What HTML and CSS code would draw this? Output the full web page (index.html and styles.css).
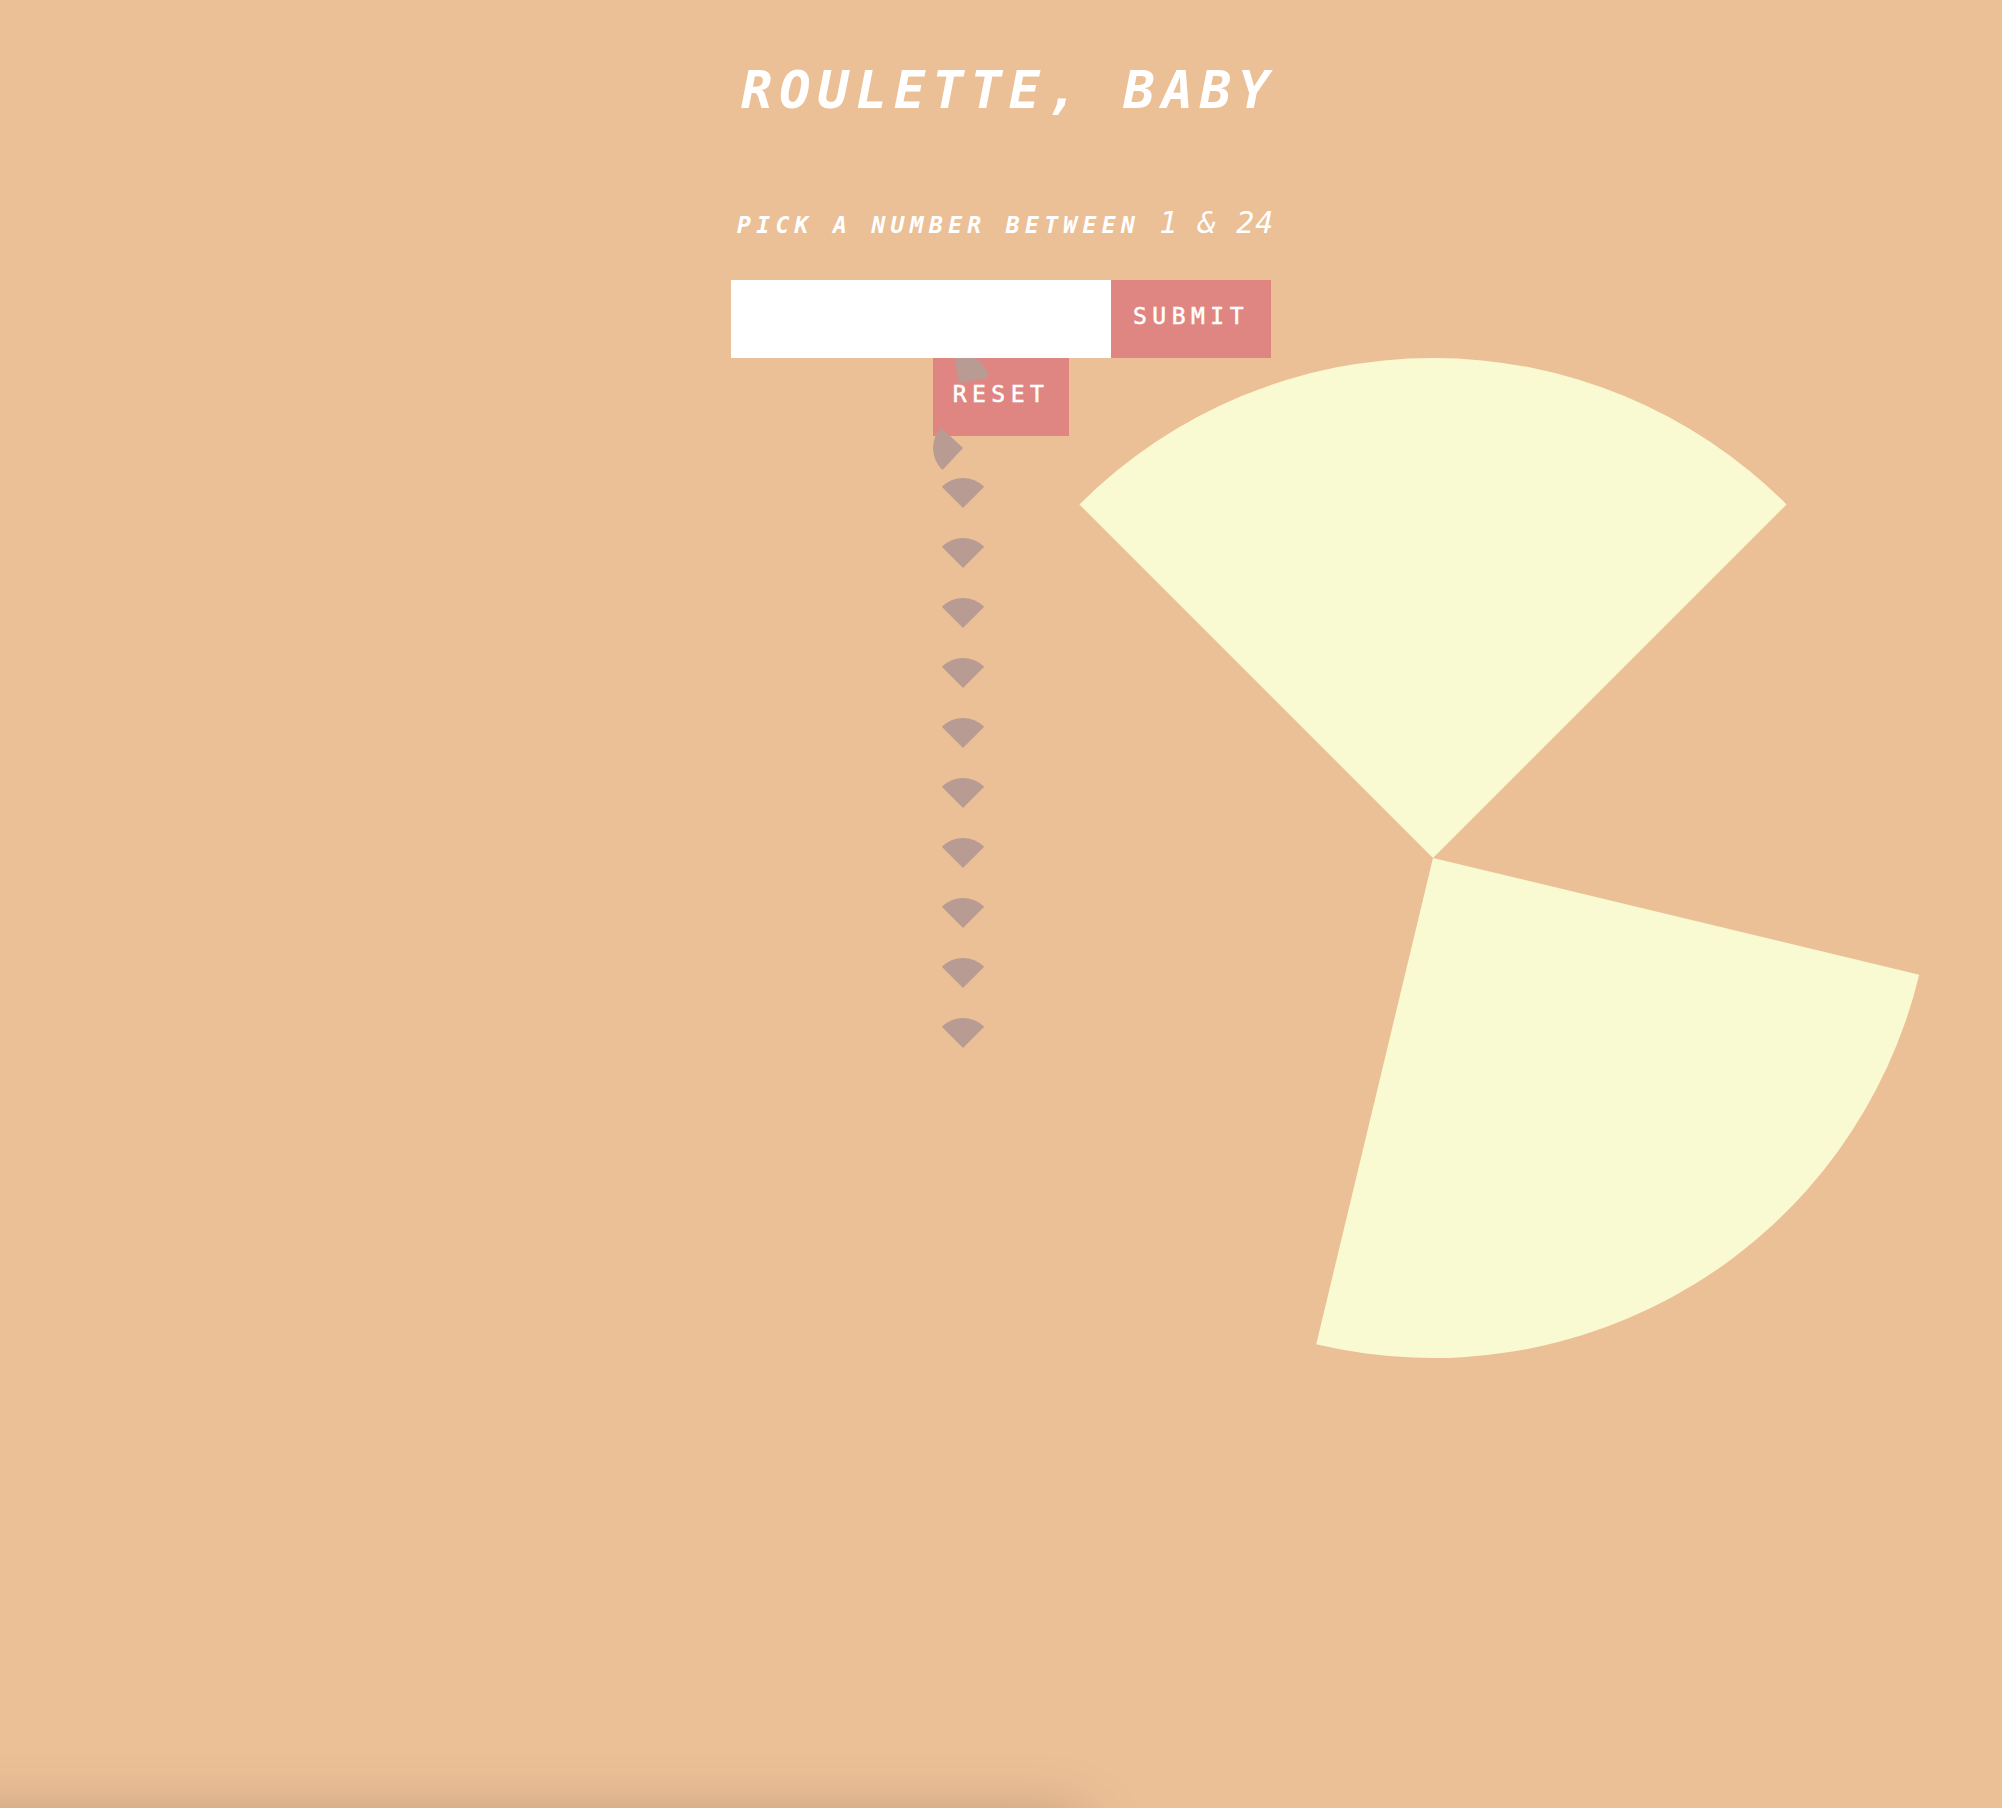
FILE: index.html
```html
<!DOCTYPE html>
<html lang="en">
<head>
<meta charset="utf-8">
<title>Roulette, Baby</title>
<link rel="stylesheet" href="styles.css">
</head>
<body>
<main class="game">
  <h1 class="title">Roulette, baby</h1>
  <p class="prompt">Pick a number between <span class="prompt-num">1 &amp; 24</span></p>
  <form class="guess">
    <input class="guess-input" type="text" aria-label="Your number">
    <button class="btn btn-submit" type="submit">Submit</button>
  </form>
  <div class="board">
    <button class="btn btn-reset" type="button">Reset</button>
    <div class="wheel">
      <div class="wedge wedge-big" style="--r:45deg"></div>
      <div class="wedge wedge-big" style="--r:193.5deg"></div>
    </div>
    <div class="crumbs">
      <div class="wedge wedge-small wedge-drift" style="--r:80deg"></div>
      <div class="wedge wedge-small" style="--r:313deg"></div>
      <div class="wedge wedge-small" style="--r:45deg"></div>
      <div class="wedge wedge-small" style="--r:45deg"></div>
      <div class="wedge wedge-small" style="--r:45deg"></div>
      <div class="wedge wedge-small" style="--r:45deg"></div>
      <div class="wedge wedge-small" style="--r:45deg"></div>
      <div class="wedge wedge-small" style="--r:45deg"></div>
      <div class="wedge wedge-small" style="--r:45deg"></div>
      <div class="wedge wedge-small" style="--r:45deg"></div>
      <div class="wedge wedge-small" style="--r:45deg"></div>
      <div class="wedge wedge-small" style="--r:45deg"></div>
    </div>
  </div>
</main>
<div class="floor"></div>
</body>
</html>
```

FILE: styles.css
```css
html {
  background: #ecc097;
}

body {
  margin: 0;
  min-height: 1808px;
  overflow: hidden;
  font-family: "DejaVu Sans Mono", "Liberation Mono", monospace;
  color: #fff;
}

.game {
  width: 540px;
  margin: 0 auto;
  padding-top: 60px;
  display: flex;
  flex-direction: column;
  align-items: center;
}

.title {
  margin: 0;
  width: 100%;
  height: 60px;
  box-sizing: border-box;
  padding-left: 10px;
  font-size: 52px;
  line-height: 60px;
  font-weight: bold;
  font-style: italic;
  letter-spacing: 6.95px;
  text-transform: uppercase;
  text-align: center;
  white-space: nowrap;
}

.prompt {
  margin: 87px 0 0;
  width: 100%;
  height: 37px;
  box-sizing: border-box;
  padding-left: 6px;
  font-size: 23px;
  line-height: 32px;
  font-weight: bold;
  font-style: italic;
  letter-spacing: 5.35px;
  text-transform: uppercase;
  text-align: left;
  white-space: nowrap;
}

.prompt-num {
  font-size: 30px;
  line-height: 32px;
  font-weight: normal;
  letter-spacing: 1.14px;
}

.guess {
  position: relative;
  z-index: 2;
  display: flex;
  width: 100%;
  height: 78px;
  margin: 36px 0 0;
}

.guess-input {
  flex: 0 0 380px;
  height: 78px;
  box-sizing: border-box;
  margin: 0;
  padding: 0 16px;
  border: 0;
  outline: none;
  background: #fff;
  font: 23px "DejaVu Sans Mono", monospace;
}

.btn {
  height: 78px;
  box-sizing: border-box;
  margin: 0;
  padding: 0 0 6px;
  border: 0;
  background: #e08682;
  color: #fff;
  font-family: "DejaVu Sans Mono", "Liberation Mono", monospace;
  font-size: 23px;
  font-weight: normal;
  letter-spacing: 5.5px;
  text-transform: uppercase;
  -webkit-text-stroke: 0.5px #fff;
  cursor: pointer;
}

.btn-submit {
  flex: 0 0 160px;
}

.board {
  position: relative;
  width: 136px;
}

.btn-reset {
  display: block;
  width: 136px;
}

.wheel,
.crumbs {
  position: absolute;
  top: 0;
  left: 0;
  z-index: 1;
}

.crumbs {
  display: flex;
  flex-direction: column;
  gap: 30px;
}

.wedge {
  border-top-left-radius: 100%;
  transform-origin: 100% 100%;
  transform: rotate(var(--r));
}

.wedge-big {
  position: absolute;
  top: 0;
  left: 0;
  width: 500px;
  height: 500px;
  background: #fafad2;
}

.wedge-small {
  width: 30px;
  height: 30px;
  background: #b89b92;
}

.wedge-drift {
  transform: translate(-4px, -5px) rotate(var(--r));
}

.floor {
  position: fixed;
  left: -100px;
  top: 1822px;
  width: 1180px;
  height: 200px;
  box-shadow: 0 0 60px rgba(0, 0, 0, 0.25);
}
```
